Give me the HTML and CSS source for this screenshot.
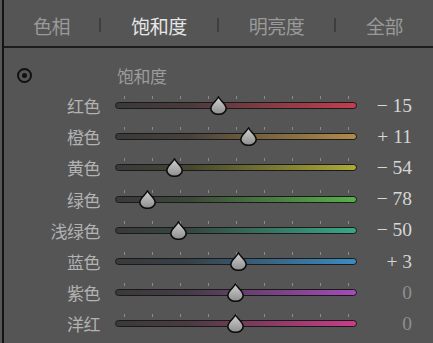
FILE: index.html
```html
<!DOCTYPE html>
<html lang="zh">
<head>
  <meta charset="UTF-8" />
  <title>HSL 饱和度</title>
  <link rel="stylesheet" href="styles.css">
</head>
<body>

  <svg class="defs" width="0" height="0">
    <linearGradient id="thumbFill" x1="0" y1="0" x2="0" y2="1">
      <stop offset="0" stop-color="#d0d0d0" />
      <stop offset="1" stop-color="#8e8e8e" />
    </linearGradient>
  </svg>

  <div class="panel">
    <div class="tabs">
      <span class="tab tab-1">色相</span>
      <span class="sep"></span>
      <span class="tab tab-2 active">饱和度</span>
      <span class="sep"></span>
      <span class="tab tab-3">明亮度</span>
      <span class="sep"></span>
      <span class="tab tab-4">全部</span>
    </div>

    <div class="content">
      <div class="title-row">
        <span class="target"></span>
        <span class="title">饱和度</span>
      </div>

      <div class="row">
        <span class="label">红色</span>
        <div class="slider red">
          <div class="ticks"><i></i><i></i><i></i><i></i><i></i><i></i><i></i><i></i><i></i></div>
          <div class="track"></div>
          <svg class="thumb" style="left: 95px" viewBox="0 0 17 19"><path d="M8.5 1 C10.5 4.8 16.2 8 16.2 12.5 A7.7 5.8 0 0 1 0.8 12.5 C0.8 8 6.5 4.8 8.5 1 Z"/></svg>
        </div>
        <span class="value">− 15</span>
      </div>

      <div class="row">
        <span class="label">橙色</span>
        <div class="slider orange">
          <div class="ticks"><i></i><i></i><i></i><i></i><i></i><i></i><i></i><i></i><i></i></div>
          <div class="track"></div>
          <svg class="thumb" style="left: 124.5px" viewBox="0 0 17 19"><path d="M8.5 1 C10.5 4.8 16.2 8 16.2 12.5 A7.7 5.8 0 0 1 0.8 12.5 C0.8 8 6.5 4.8 8.5 1 Z"/></svg>
        </div>
        <span class="value">+ 11</span>
      </div>

      <div class="row">
        <span class="label">黄色</span>
        <div class="slider yellow">
          <div class="ticks"><i></i><i></i><i></i><i></i><i></i><i></i><i></i><i></i><i></i></div>
          <div class="track"></div>
          <svg class="thumb" style="left: 50.7px" viewBox="0 0 17 19"><path d="M8.5 1 C10.5 4.8 16.2 8 16.2 12.5 A7.7 5.8 0 0 1 0.8 12.5 C0.8 8 6.5 4.8 8.5 1 Z"/></svg>
        </div>
        <span class="value">− 54</span>
      </div>

      <div class="row">
        <span class="label">绿色</span>
        <div class="slider green">
          <div class="ticks"><i></i><i></i><i></i><i></i><i></i><i></i><i></i><i></i><i></i></div>
          <div class="track"></div>
          <svg class="thumb" style="left: 23.5px" viewBox="0 0 17 19"><path d="M8.5 1 C10.5 4.8 16.2 8 16.2 12.5 A7.7 5.8 0 0 1 0.8 12.5 C0.8 8 6.5 4.8 8.5 1 Z"/></svg>
        </div>
        <span class="value">− 78</span>
      </div>

      <div class="row">
        <span class="label">浅绿色</span>
        <div class="slider aqua">
          <div class="ticks"><i></i><i></i><i></i><i></i><i></i><i></i><i></i><i></i><i></i></div>
          <div class="track"></div>
          <svg class="thumb" style="left: 55.3px" viewBox="0 0 17 19"><path d="M8.5 1 C10.5 4.8 16.2 8 16.2 12.5 A7.7 5.8 0 0 1 0.8 12.5 C0.8 8 6.5 4.8 8.5 1 Z"/></svg>
        </div>
        <span class="value">− 50</span>
      </div>

      <div class="row">
        <span class="label">蓝色</span>
        <div class="slider blue">
          <div class="ticks"><i></i><i></i><i></i><i></i><i></i><i></i><i></i><i></i><i></i></div>
          <div class="track"></div>
          <svg class="thumb" style="left: 115.4px" viewBox="0 0 17 19"><path d="M8.5 1 C10.5 4.8 16.2 8 16.2 12.5 A7.7 5.8 0 0 1 0.8 12.5 C0.8 8 6.5 4.8 8.5 1 Z"/></svg>
        </div>
        <span class="value">+ 3</span>
      </div>

      <div class="row">
        <span class="label">紫色</span>
        <div class="slider purple">
          <div class="ticks"><i></i><i></i><i></i><i></i><i></i><i></i><i></i><i></i><i></i></div>
          <div class="track"></div>
          <svg class="thumb" style="left: 112px" viewBox="0 0 17 19"><path d="M8.5 1 C10.5 4.8 16.2 8 16.2 12.5 A7.7 5.8 0 0 1 0.8 12.5 C0.8 8 6.5 4.8 8.5 1 Z"/></svg>
        </div>
        <span class="value zero">0</span>
      </div>

      <div class="row">
        <span class="label">洋红</span>
        <div class="slider magenta">
          <div class="ticks"><i></i><i></i><i></i><i></i><i></i><i></i><i></i><i></i><i></i></div>
          <div class="track"></div>
          <svg class="thumb" style="left: 112px" viewBox="0 0 17 19"><path d="M8.5 1 C10.5 4.8 16.2 8 16.2 12.5 A7.7 5.8 0 0 1 0.8 12.5 C0.8 8 6.5 4.8 8.5 1 Z"/></svg>
        </div>
        <span class="value zero">0</span>
      </div>
    </div>
  </div>

</body>
</html>
```

FILE: styles.css
```css
* {
  box-sizing: border-box;
  margin: 0;
  padding: 0;
}

body {
  background: #555555;
  font-family: "Noto Sans CJK SC", "Noto Sans", sans-serif;
  padding-left: 2px;
  overflow: hidden;
}

.defs {
  position: absolute;
}

.panel {
  border-left: 2px solid #141414;
  height: 343px;
}

/* Tabs */
.tabs {
  display: flex;
  align-items: center;
  height: 48px;
  padding-top: 4px;
  border-bottom: 2px solid #1c1c1c;
}

.tab {
  text-align: center;
  font-size: 19px;
  color: #9a9a9a;
  letter-spacing: -0.5px;
}

.tab.active {
  color: #e6e6e6;
}

.tab-1 { width: 95px; }
.tab-2 { width: 116px; }
.tab-3 { width: 115px; }
.tab-4 { flex: 1; }

.sep {
  width: 2px;
  height: 14px;
  background: #3e3e3e;
}

/* Content */
.content {
  padding-top: 12px;
}

.title-row,
.row {
  display: grid;
  grid-template-columns: 96px 242px 40px;
  column-gap: 15px;
  align-items: center;
}

.title-row {
  height: 30px;
}

.target {
  width: 15px;
  height: 15px;
  margin-left: 13px;
  border: 2px solid #111;
  border-radius: 50%;
  display: flex;
  align-items: center;
  justify-content: center;
}

.target::after {
  content: "";
  width: 5px;
  height: 5px;
  border-radius: 50%;
  background: #111;
}

.title {
  font-size: 17px;
  color: #9c9c9c;
  padding-left: 2px;
  letter-spacing: -0.5px;
}

.row {
  height: 31.2px;
}

.label {
  text-align: right;
  font-size: 17px;
  color: #b2b2b2;
  letter-spacing: -0.5px;
}

.slider {
  position: relative;
  padding-bottom: 6px;
}

.ticks {
  display: flex;
  justify-content: space-between;
  width: 225px;
  height: 3px;
  margin-left: 9px;
  margin-bottom: 3px;
}

.ticks i {
  width: 1px;
  height: 3px;
  background: #8a8a8a;
}

.track {
  height: 7px;
  border-radius: 4px;
  border: 1px solid #1a1a1a;
  background: #3a3a3a;
}

.thumb {
  position: absolute;
  top: 0;
  width: 17px;
  height: 19px;
}

.thumb path {
  fill: url(#thumbFill);
  stroke: #0c0c0c;
  stroke-width: 1.6;
}

.red .track { background: linear-gradient(to right, #3a3a3a, #4a3a3c 30%, #c53d4e); }
.orange .track { background: linear-gradient(to right, #3a3a3a, #48413a 30%, #b38b48); }
.yellow .track { background: linear-gradient(to right, #3a3a3a, #45452f 30%, #aeaa35); }
.green .track { background: linear-gradient(to right, #3a3a3a, #3b4838 30%, #56b14a); }
.aqua .track { background: linear-gradient(to right, #3a3a3a, #35463f 30%, #37a889); }
.blue .track { background: linear-gradient(to right, #3a3a3a, #364048 30%, #3a8cc2); }
.purple .track { background: linear-gradient(to right, #3a3a3a, #463b48 30%, #a64abb); }
.magenta .track { background: linear-gradient(to right, #3a3a3a, #4a3a42 30%, #cb3c89); }

.value {
  text-align: right;
  font-family: "Liberation Serif", serif;
  font-size: 19.5px;
  color: #d6d6d6;
  white-space: nowrap;
}

.value.zero {
  color: #8e8e8e;
}
```
